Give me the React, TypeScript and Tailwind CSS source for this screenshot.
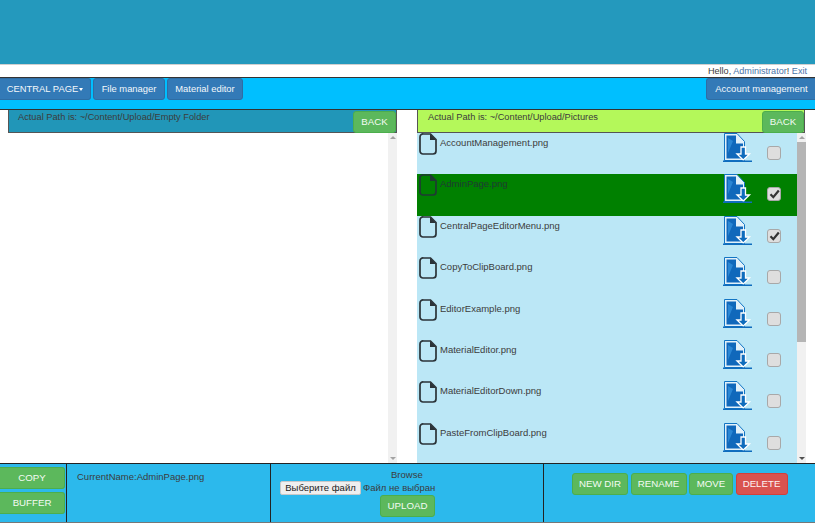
const files = ["AccountManagement.png","AdminPage.png","CentralPageEditorMenu.png","CopyToClipBoard.png","EditorExample.png","MaterialEditor.png","MaterialEditorDown.png","PasteFromClipBoard.png"];

function FileIcon({ dark }: { dark?: boolean }) {
  const c = dark ? "#1f3a33" : "#2b3338";
  return (
    <svg width="18" height="22" viewBox="0 0 18 22" className="shrink-0">
      <path d="M4.5 1h7L17 6.500V18a3 3 0 0 1-3 3H4a3 3 0 0 1-3-3V4a3 3 0 0 1 3.500-3z" fill="none" stroke={c} strokeWidth="1.700" />
      <path d="M11 1l6 6h-6z" fill={c} />
    </svg>
  );
}

function DownloadIcon() {
  return (
    <svg width="30" height="30" viewBox="0 0 30 30" className="shrink-0">
      <path d="M1.500 0.500h12.500l7.500 8v19h-20z" fill="#e2f1fa" stroke="#1275c4" strokeWidth="1" />
      <path d="M3.500 2.500h9.500v8h7v15h-16.500z" fill="#1068bb" />
      <path d="M5 5l5 3-5 12z" fill="#2a86d4" />
      <path d="M18 14h4.500v7h4l-6.250 6-6.250-6h4z" fill="#0f6cbd" stroke="#ffffff" strokeWidth="1.300" />
      <rect x="0" y="27.500" width="29" height="1.500" fill="#0f6cbd" />
    </svg>
  );
}

function Check({ on }: { on?: boolean }) {
  return (
    <div className="w-[14px] h-[14px] rounded-[3px] bg-[#dedede] border-[1.500px] border-[#a8a8a8] flex items-center justify-center">
      {on && (
        <svg width="11" height="10" viewBox="0 0 11 10">
          <path d="M1.500 5.200l2.800 3L9.800 1.500" fill="none" stroke="#333" strokeWidth="2.200" />
        </svg>
      )}
    </div>
  );
}

function Scroll({ thumb }: { thumb?: boolean }) {
  return (
    <div className="w-[9px] shrink-0 bg-[#f1f1f1] flex flex-col items-center">
      <div className="h-[9px] flex items-center justify-center shrink-0">
        <div className="border-x-[3px] border-x-transparent border-b-[3px] border-b-[#a3a3a3]" />
      </div>
      <div className={thumb ? "w-full h-[200px] bg-[#b5b5b5]" : "w-full h-[200px]"} />
      <div className="flex-1" />
      <div className="h-[9px] flex items-center justify-center shrink-0">
        <div className={thumb ? "border-x-[3px] border-x-transparent border-t-[3px] border-t-[#505050]" : "border-x-[3px] border-x-transparent border-t-[3px] border-t-[#a3a3a3]"} />
      </div>
    </div>
  );
}

const navBtn = "h-[22px] bg-[#337ab7] border border-[#2e6da4] rounded-[3px] text-[#f4f8fb] text-[9.400px] flex items-center justify-center";
const greenBtn = "bg-[#5cb85c] border border-[#4cae4c] rounded-[3px] text-[#f4fbf4] text-[9.700px] flex items-center justify-center";

export default function App() {
  return (
    <div className="w-[815px] h-[523px] overflow-hidden bg-white flex flex-col text-[#3c3c3c] text-[9.500px] font-['Liberation_Sans',Arial,sans-serif]">
      <div className="h-[64px] bg-[#2499bd] shrink-0" />
      <div className="h-[14px] shrink-0 border-t border-t-[#cfcfcf] border-b border-b-[#333] flex items-center justify-end pr-[8px] text-[9.100px] pt-[1px]">
        <span>Hello, <span className="text-[#4a74a8]">Administrator</span>! <span className="text-[#4a74a8]">Exit</span></span>
      </div>
      <div className="h-[32px] shrink-0 bg-[#00bfff] border-b border-b-[#333] flex items-start justify-between">
        <div className="flex gap-[2px]">
          <div className={`${navBtn} w-[91px] rounded-l-none border-l-0`}>CENTRAL PAGE<span className="ml-[1px] border-x-[2.500px] border-x-transparent border-t-[3px] border-t-white" /></div>
          <div className={`${navBtn} w-[72px]`}>File manager</div>
          <div className={`${navBtn} w-[76px]`}>Material editor</div>
        </div>
        <div className={`${navBtn} w-[109px] rounded-r-none border-r-0 text-[9.500px] pl-[1px]`}>Account management</div>
      </div>
      <div className="flex-1 min-h-0 flex">
        <div className="w-[397px] shrink-0 pl-[8px] flex flex-col">
          <div className="h-[23px] shrink-0 bg-[#2196b8] border border-[#555] border-t-0 flex items-start justify-between pl-[9px] pt-[1px]">
            <span className="text-[9.250px]">Actual Path is: ~/Content/Upload/Empty Folder</span>
            <div className={`${greenBtn} w-[43px] h-[22px]`}>BACK</div>
          </div>
          <div className="flex-1 min-h-0 flex justify-end">
            <Scroll />
          </div>
        </div>
        <div className="w-[388px] ml-[20px] shrink-0 flex flex-col">
          <div className="h-[23px] shrink-0 bg-[#b4f85a] border border-[#555] border-t-0 flex items-start justify-between pl-[10px] pt-[1px]">
            <span className="text-[9.250px]">Actual Path is: ~/Content/Upload/Pictures</span>
            <div className={`${greenBtn} w-[42px] h-[22px]`}>BACK</div>
          </div>
          <div className="flex-1 min-h-0 flex">
            <div className="w-[380px] shrink-0 bg-[#bbe7f6] overflow-hidden">
              {files.map((f, i) => (
                <div key={f} className={`h-[41.400px] flex items-start pl-[2px] ${i === 1 ? "bg-[#008000] text-[#1f3a33]" : ""}`}>
                  <FileIcon dark={i === 1} />
                  <span className="ml-[3px] mt-[3px] flex-1">{f}</span>
                  <div className="mr-[14px]"><DownloadIcon /></div>
                  <div className="mr-[16px] mt-[13px]"><Check on={i === 1 || i === 2} /></div>
                </div>
              ))}
            </div>
            <Scroll thumb />
          </div>
        </div>
      </div>
      <div className="h-[60px] shrink-0 bg-[#2cb9ec] border-t border-t-[#222] border-b border-b-[#777] flex">
        <div className="w-[67px] shrink-0 border-r border-r-[#222] flex flex-col gap-[3px] pt-[3px] pr-[1px]">
          <div className={`${greenBtn} h-[22px] rounded-l-none border-l-0`}>COPY</div>
          <div className={`${greenBtn} h-[22px] rounded-l-none border-l-0`}>BUFFER</div>
        </div>
        <div className="w-[204px] shrink-0 border-r border-r-[#222] pl-[10px] pt-[6px]">CurrentName:AdminPage.png</div>
        <div className="w-[273px] shrink-0 border-r border-r-[#222] flex flex-col">
          <div className="pt-[5px] pl-[120px] leading-[11px]">Browse</div>
          <div className="flex items-center pl-[9px] mt-[1px]">
            <div className="w-[81px] h-[14px] bg-[#efefef] border border-[#c8c8c8] rounded-[2px] text-[#222] text-[9.500px] flex items-center justify-center">Выберите файл</div>
            <span className="ml-[2px]">Файл не выбран</span>
          </div>
          <div className="flex justify-end pr-[108px]">
            <div className={`${greenBtn} w-[55px] h-[22px]`}>UPLOAD</div>
          </div>
        </div>
        <div className="flex items-start gap-[2.500px] pt-[9px] pl-[28px]">
          <div className={`${greenBtn} w-[56px] h-[22px]`}>NEW DIR</div>
          <div className={`${greenBtn} w-[56px] h-[22px]`}>RENAME</div>
          <div className={`${greenBtn} w-[44px] h-[22px]`}>MOVE</div>
          <div className="w-[52px] h-[22px] bg-[#d9534f] border border-[#d43f3a] rounded-[3px] text-[#fdf3f3] text-[9.700px] flex items-center justify-center">DELETE</div>
        </div>
      </div>
    </div>
  );
}
